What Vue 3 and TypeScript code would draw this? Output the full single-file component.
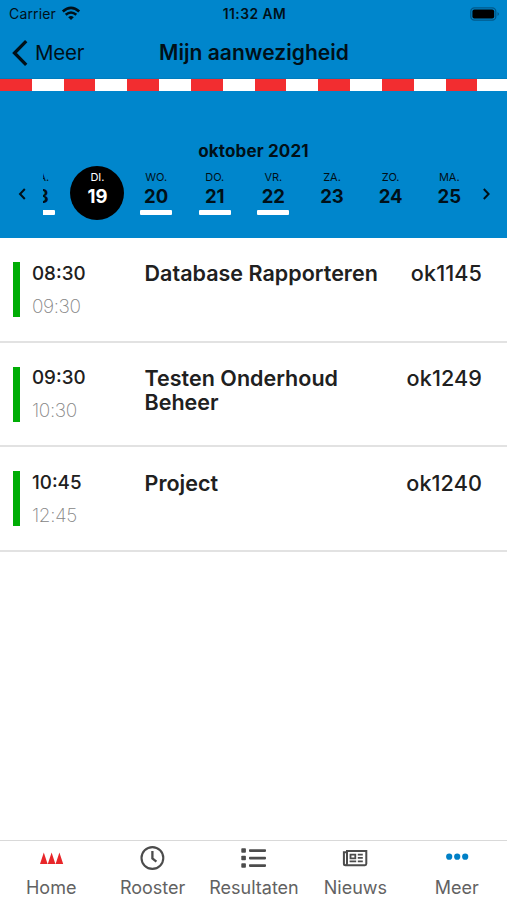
<script setup lang="ts">
interface Day { name: string; date: number; marked: boolean; active?: boolean }
interface Lesson { start: string; end: string; title: string; room: string }

const days: Day[] = [
  { name: 'MA.', date: 18, marked: true },
  { name: 'DI.', date: 19, marked: false, active: true },
  { name: 'WO.', date: 20, marked: true },
  { name: 'DO.', date: 21, marked: true },
  { name: 'VR.', date: 22, marked: true },
  { name: 'ZA.', date: 23, marked: false },
  { name: 'ZO.', date: 24, marked: false },
  { name: 'MA.', date: 25, marked: false },
]

const lessons: Lesson[] = [
  { start: '08:30', end: '09:30', title: 'Database Rapporteren', room: 'ok1145' },
  { start: '09:30', end: '10:30', title: 'Testen Onderhoud Beheer', room: 'ok1249' },
  { start: '10:45', end: '12:45', title: 'Project', room: 'ok1240' },
]
</script>

<template>
  <div class="screen">
    <header class="top">
      <div class="status">
        <div class="carrier">
          <span>Carrier</span>
          <svg width="20" height="15" viewBox="0 0 20 15" fill="none" stroke="#001018">
            <path d="M1.8 5.6Q10-1.8 18.2 5.6" stroke-width="2.7" />
            <path d="M4.7 8.8Q10 4.2 15.3 8.8" stroke-width="2.6" />
            <path d="M7.2 11.2Q10 8.8 12.8 11.2L10 14Z" fill="#001018" stroke="none" />
          </svg>
        </div>
        <span class="clock">11:32 AM</span>
        <svg class="battery" width="31" height="14" viewBox="0 0 31 14">
          <rect x="1.8" y="0.8" width="25" height="12.4" rx="3.6" fill="none" stroke="#00598a" stroke-width="1.3" />
          <rect x="3.4" y="2.6" width="21.8" height="8.8" rx="2" fill="#000" />
          <path d="M28.5 5q3 2 0 4z" fill="#00598a" />
        </svg>
      </div>
      <div class="nav">
        <div class="back">
          <svg width="16" height="26" viewBox="0 0 16 26" fill="none" stroke="#001018" stroke-width="3.3">
            <path d="M14.2 1.2L2.5 13L14.2 24.8" />
          </svg>
          <span>Meer</span>
        </div>
        <h1>Mijn aanwezigheid</h1>
        <span></span>
      </div>
    </header>
    <div class="tape"></div>

    <section class="calendar">
      <h2>oktober 2021</h2>
      <div class="week">
        <svg class="arrow" width="8" height="12" viewBox="0 0 8 12" fill="none" stroke="#001018" stroke-width="2">
          <path d="M6.8 1L2 6L6.8 11" />
        </svg>
        <div class="window">
          <div v-for="day in days" :key="day.date" class="day">
            <div class="disc" :class="{ active: day.active }">
              <span class="name">{{ day.name }}</span>
              <span class="date">{{ day.date }}</span>
              <span v-if="day.marked" class="mark"></span>
            </div>
          </div>
        </div>
        <svg class="arrow" width="8" height="12" viewBox="0 0 8 12" fill="none" stroke="#001018" stroke-width="2">
          <path d="M1.8 1L6.6 6L1.8 11" />
        </svg>
      </div>
    </section>

    <main>
      <article v-for="lesson in lessons" :key="lesson.start" class="lesson">
        <span class="bar"></span>
        <div class="times">
          <span class="start">{{ lesson.start }}</span>
          <span class="end">{{ lesson.end }}</span>
        </div>
        <div class="title">{{ lesson.title }}</div>
        <div class="room">{{ lesson.room }}</div>
      </article>
    </main>

    <nav class="tabs">
      <div class="tab">
        <svg width="26" height="26" viewBox="0 0 26 26" fill="#e8262a">
          <path d="M2 19L5.8 7.5L9.6 19ZM9.8 19L13.6 7.5L17.4 19ZM17.6 19L21.4 7.5L25.2 19Z" />
        </svg>
        <span class="home">Home</span>
      </div>
      <div class="tab">
        <svg width="26" height="26" viewBox="-0.4 0 26 26" fill="none" stroke="#4c4c4c" stroke-width="2.1">
          <circle cx="13" cy="13" r="10.9" />
          <path d="M13 6V13.5L17 16.7" stroke-width="2.3" />
        </svg>
        <span class="rooster">Rooster</span>
      </div>
      <div class="tab">
        <svg width="26" height="26" viewBox="-0.5 0 26 26" fill="#4c4c4c">
          <rect x="0.8" y="3.3" width="4.6" height="4.5" rx=".8" />
          <rect x="0.8" y="10.8" width="4.6" height="4.5" rx=".8" />
          <rect x="0.8" y="18.3" width="4.6" height="4.5" rx=".8" />
          <rect x="8.5" y="4.2" width="17" height="2.7" rx=".8" />
          <rect x="8.5" y="11.7" width="17" height="2.7" rx=".8" />
          <rect x="8.5" y="19.2" width="17" height="2.7" rx=".8" />
        </svg>
        <span class="resultaten">Resultaten</span>
      </div>
      <div class="tab">
        <svg width="26" height="26" viewBox="0 0 26 26" fill="none" stroke="#4c4c4c" stroke-width="2">
          <path d="M5 18.7V5.9H24.3V18.8Q24.3 20.2 22.9 20.2H3.4Q1.9 20.2 1.9 18.7V7.3H5M5 18.3Q5 20 3.4 20.2" />
          <path d="M8.5 9.7H13.3V13.3H8.5ZM15.8 9.6H20.8M15.8 12.8H20.8M7.6 16.3H14.2M15.8 16.3H20.8" stroke-width="1.8" />
        </svg>
        <span class="nieuws">Nieuws</span>
      </div>
      <div class="tab">
        <svg width="26" height="26" viewBox="-0.7 0 26 26" fill="#0080c6">
          <circle cx="5.5" cy="11.7" r="3.1" /><circle cx="13.5" cy="11.7" r="3.1" /><circle cx="21.5" cy="11.7" r="3.1" />
        </svg>
        <span class="meer">Meer</span>
      </div>
    </nav>
  </div>
</template>

<style>
body { background: #fff; }
</style>

<style scoped>
.screen {
  height: 900px;
  display: flex;
  flex-direction: column;
  overflow: hidden;
  font-family: Inter, "Liberation Sans", sans-serif;
  color: #202020;
  background: #fff;
}
svg { display: block; flex: none; }
.top { height: 79px; box-sizing: border-box; background: #0086cc; border-bottom: 1px solid #007dbd; color: #001018; }
.status {
  height: 27px;
  display: grid;
  grid-template-columns: 1fr auto 1fr;
  align-items: center;
  padding: 0 7px 0 9px;
  font-size: 14px;
}
.carrier { display: flex; align-items: center; gap: 5px; letter-spacing: .15px; }
.clock { font-weight: 600; font-size: 13.8px; letter-spacing: .5px; }
.battery { justify-self: end; }
.nav { height: 51px; display: grid; grid-template-columns: 1fr auto 1fr; align-items: center; padding: 0 11px 0 12px; }
.back { display: flex; align-items: center; gap: 7px; font-size: 20.5px; letter-spacing: -.2px; }
h1 { margin: 0; font-size: 21px; font-weight: 600; letter-spacing: .05px; }
.tape {
  height: 12px;
  background: repeating-linear-gradient(90deg, #f22d30 0 31.8px, #fff 31.8px 63.65px);
}
.calendar { height: 147px; box-sizing: border-box; padding-top: 48px; background: #0086cc; color: #001018; }
h2 { margin: 0; height: 24px; line-height: 24px; text-align: center; font-size: 17px; font-weight: 700; letter-spacing: .15px; }
.week { display: flex; align-items: center; height: 60px; padding: 0 17px 0 18px; }
.arrow { margin-top: 1px; }
.window { flex: 1; display: flex; margin-left: 17px; margin-right: 5px; overflow: hidden; height: 60px; }
.day { flex: none; width: 58.65px; display: flex; justify-content: center; }
.day:first-child { margin-left: -33.5px; }
.disc {
  width: 54px;
  height: 54px;
  margin-top: 3px;
  border-radius: 50%;
  display: flex;
  flex-direction: column;
  align-items: center;
}
.active { background: #000; color: #fff; }
.name { margin-top: 4px; height: 14px; line-height: 14px; font-size: 11px; }
.date { margin-top: 1px; height: 23px; line-height: 23px; font-size: 18.5px; font-weight: 700; }
.mark { flex: none; width: 32px; height: 5px; margin-top: 2px; border-radius: 1px; background: #fff; }
main { flex: 1; }
.lesson {
  height: 104.7px;
  box-sizing: border-box;
  border-bottom: 2px solid #e2e2e2;
  padding: 24px 25px 0 13px;
  display: flex;
  align-items: flex-start;
}
.bar { width: 6.5px; height: 55px; background: #00ad05; }
.times { display: flex; flex-direction: column; width: 112.5px; padding-left: 12.5px; }
.start { margin-top: .5px; height: 22px; line-height: 22px; font-size: 18.8px; font-weight: 500; }
.end { margin-top: 11.3px; height: 22px; line-height: 22px; font-size: 19px; font-weight: 200; letter-spacing: -.4px; color: #858585; }
.title { width: 240px; margin-top: -.6px; line-height: 24px; font-size: 21.5px; font-weight: 600; letter-spacing: .02px; }
.room { flex: 1; margin-top: -.6px; text-align: right; line-height: 24px; font-size: 21.6px; font-weight: 500; letter-spacing: .1px; }
.tabs {
  height: 60px;
  box-sizing: border-box;
  border-top: 1px solid #d9d9d9;
  display: grid;
  grid-template-columns: repeat(5, 1fr);
  color: #626262;
}
.tab { display: flex; flex-direction: column; align-items: center; padding-top: 4px; font-size: 18px; line-height: 24px; }
.tab span { margin-top: 5px; padding-left: 1px; }
</style>
